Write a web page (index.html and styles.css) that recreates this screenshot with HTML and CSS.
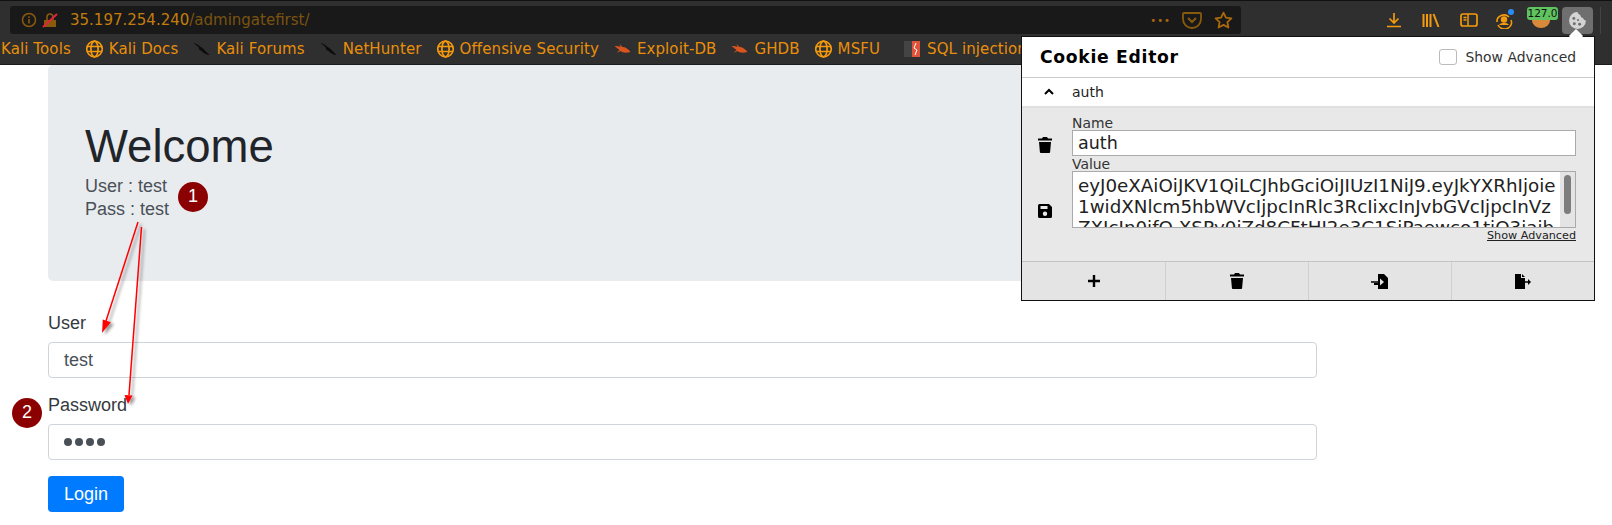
FILE: index.html
```html
<!DOCTYPE html>
<html lang="en">
<head>
<meta charset="utf-8">
<title>Welcome</title>
<link rel="stylesheet" href="styles.css">
</head>
<body>
<header class="chrome">
  <div class="toolbar">
    <div class="urlbar">
      <svg class="ub-ico" width="16" height="16" viewBox="0 0 16 16"><circle cx="8" cy="8" r="6.5" fill="none" stroke="#8a5a0c" stroke-width="1.5"/><rect x="7.2" y="7" width="1.6" height="4.5" fill="#8a5a0c"/><rect x="7.2" y="4.3" width="1.6" height="1.6" fill="#8a5a0c"/></svg>
      <svg class="ub-ico" width="16" height="16" viewBox="0 0 16 16"><path d="M2 8h12v7H2z" fill="#8a5a0c"/><path d="M5 8V5a3 3 0 0 1 6 0v3" fill="none" stroke="#8a5a0c" stroke-width="1.6"/><path d="M1 15 15 2" stroke="#e0243a" stroke-width="2"/></svg>
      <span class="url"><b class="host">35.197.254.240</b>/admingatefirst/</span>
      <span class="dots">•••</span>
      <svg class="ub-act" width="20" height="18" viewBox="0 0 20 18"><path d="M2 2h16a1 1 0 0 1 1 1v5a9 9 0 0 1-18 0V3a1 1 0 0 1 1-1z" fill="none" stroke="#8a5a0c" stroke-width="1.8"/><path d="m6 7 4 4 4-4" fill="none" stroke="#8a5a0c" stroke-width="2"/></svg>
      <svg class="ub-act" width="19" height="18" viewBox="0 0 19 18"><path d="m9.5 1.6 2.4 5 5.5.7-4 3.8 1 5.400-4.900-2.600-4.900 2.600 1-5.400-4-3.800 5.500-.7z" fill="none" stroke="#a8690c" stroke-width="1.8" stroke-linejoin="round"/></svg>
    </div>
    <div class="tools">
      <svg width="16" height="16" viewBox="0 0 16 16"><path d="M8 1v9M3.500 6.500 8 11l4.500-4.500M1 14.500h14" fill="none" stroke="#f59a0c" stroke-width="1.700"/></svg>
      <svg width="18" height="14" viewBox="0 0 18 14"><path d="M1.500 1v13M5 1v13M8.500 1v13M11.500 1l5 13" fill="none" stroke="#f59a0c" stroke-width="2"/></svg>
      <svg class="last-tool" width="18" height="14" viewBox="0 0 18 14"><rect x="1" y="1" width="16" height="12" rx="2" fill="none" stroke="#f59a0c" stroke-width="1.700"/><path d="M8 1v12M3.500 4.500h3M3.500 7h3" stroke="#f59a0c" stroke-width="1.500"/></svg>
      <span class="acct">
        <svg width="18" height="16" viewBox="0 0 18 16"><path d="M2 9a7 6.500 0 0 1 12-5M16 7a7 6.500 0 0 1-13 5" fill="none" stroke="#f59a0c" stroke-width="1.600"/><circle cx="9" cy="6.500" r="3.200" fill="#f59a0c"/><path d="M4 12c2-3 8-3 10 0z" fill="#f59a0c"/></svg>
        <i class="dot"></i>
      </span>
      <span class="ext">
        <i class="ext-ico"></i>
        <b class="ext-badge">127.0</b>
      </span>
      <span class="cookie-btn">
        <svg width="19" height="19" viewBox="0 0 18 18"><path d="M9 1a8 8 0 1 0 8 8c-1.500 0-2.500-1-2.700-2.300C12.800 6.500 11.700 5.300 11.600 3.800 10.400 3.500 9.400 2.400 9 1z" fill="#d4d4d4"/><circle cx="5.500" cy="7" r="1.400" fill="#6f6f6f"/><circle cx="6" cy="12" r="1.400" fill="#6f6f6f"/><circle cx="11" cy="12.500" r="1.400" fill="#6f6f6f"/><circle cx="9.500" cy="8.500" r="1" fill="#6f6f6f"/></svg>
      </span>
      <i class="sep"></i>
    </div>
  </div>
  <nav class="bookmarks">
    <span class="bm">Kali Tools</span>
    <span class="bm"><svg class="globe" viewBox="0 0 18 18"><use href="#g"/></svg>Kali Docs</span>
    <span class="bm"><svg class="bm-ico" viewBox="0 0 18 14"><use href="#k"/></svg>Kali Forums</span>
    <span class="bm"><svg class="bm-ico" viewBox="0 0 18 14"><use href="#k"/></svg>NetHunter</span>
    <span class="bm"><svg class="globe" viewBox="0 0 18 18"><use href="#g"/></svg>Offensive Security</span>
    <span class="bm"><svg class="bm-ico" viewBox="0 0 18 14"><use href="#b"/></svg>Exploit-DB</span>
    <span class="bm"><svg class="bm-ico" viewBox="0 0 18 14"><use href="#b"/></svg>GHDB</span>
    <span class="bm"><svg class="globe" viewBox="0 0 18 18"><use href="#g"/></svg>MSFU</span>
    <span class="bm"><svg class="sq-ico" viewBox="0 0 16 16"><rect width="8" height="16" fill="#444"/><rect x="8" width="8" height="16" fill="#e0533a"/><path d="m12 2-2 5 3 2-2 5" fill="none" stroke="#fff" stroke-width="1"/></svg>SQL injection</span>
  </nav>
</header>

<main class="page">
  <section class="jumbo">
    <h1 class="title">Welcome</h1>
    <p class="cred">User : test</p>
    <p class="cred">Pass : test</p>
  </section>
  <form class="login">
    <label class="lbl">User</label>
    <div class="field">test</div>
    <label class="lbl">Password</label>
    <div class="field pw"><i></i><i></i><i></i><i></i></div>
    <button class="btn" type="button">Login</button>
  </form>
</main>

<svg class="arrows" width="200" height="260" viewBox="0 0 200 260">
  <defs>
    <filter id="sh" x="-50%" y="-10%" width="200%" height="120%"><feDropShadow dx="3" dy="2" stdDeviation="1.500" flood-color="#000" flood-opacity=".4"/></filter>
  </defs>
  <g filter="url(#sh)">
    <path d="M138 2 105 104" stroke="#f00" stroke-width="1.500" fill="none"/>
    <path d="m102 113 .8-13.500 8 2.700z" fill="#f00"/>
    <path d="M141.500 7 129 175" stroke="#f00" stroke-width="1.500" fill="none"/>
    <path d="m128 184-3.500-9 8 .5z" fill="#f00"/>
  </g>
</svg>
<b class="badge b1">1</b>
<b class="badge b2">2</b>

<aside class="popup">
  <i class="caret"></i>
  <div class="pop-head">
    <h2 class="pop-title">Cookie Editor</h2>
    <label class="adv"><i class="check"></i>Show Advanced</label>
  </div>
  <div class="row-head">
    <svg width="12" height="8" viewBox="0 0 12 8"><path d="m2 6 4-4 4 4" fill="none" stroke="#000" stroke-width="2"/></svg>
    <span>auth</span>
  </div>
  <div class="editor">
    <div class="side">
      <svg width="14" height="16" viewBox="0 0 14 16"><use href="#trash"/></svg>
      <svg width="14" height="14" viewBox="0 0 14 14"><use href="#save"/></svg>
    </div>
    <div class="fields">
      <div class="f-lbl">Name</div>
      <div class="f-input">auth</div>
      <div class="f-lbl">Value</div>
      <div class="f-area">
        <div class="f-text">eyJ0eXAiOiJKV1QiLCJhbGciOiJIUzI1NiJ9.eyJkYXRhIjoie<br>1widXNlcm5hbWVcIjpcInRlc3RcIixcInJvbGVcIjpcInVz<br>ZXJcIn0ifQ.XSPy0jZd8CFtHI2e3C1SjPaewco1tjO3jajb</div>
        <div class="track"><i class="thumb"></i></div>
      </div>
      <a class="f-adv">Show Advanced</a>
    </div>
  </div>
  <div class="pop-foot">
    <span class="cell"><svg width="14" height="14" viewBox="0 0 14 14"><path d="M7 1v12M1 7h12" stroke="#000" stroke-width="2.400"/></svg></span>
    <span class="cell"><svg width="14" height="16" viewBox="0 0 14 16"><use href="#trash"/></svg></span>
    <span class="cell"><svg width="18" height="15" viewBox="0 0 18 15"><path d="M7 0h6l4 4v11H7v-4H3V9h4V7z" fill="#000"/><path d="M0 8h9" stroke="#000" stroke-width="1.500" fill="none"/><path d="m9 4.500 4 3.500-4 3.500z" fill="#e4e4e4"/></svg></span>
    <span class="cell"><svg width="16" height="15" viewBox="0 0 16 15"><path d="M0 0h6v4h4v11H0zM7 0l3 3H7z" fill="#000"/><path d="M9 8h5" stroke="#000" stroke-width="1.500"/><path d="m13 5 3 3-3 3z" fill="#000"/></svg></span>
  </div>
</aside>

<svg class="defs" width="0" height="0">
  <defs>
    <symbol id="g" viewBox="0 0 18 18"><g fill="none" stroke="#f59a0c" stroke-width="1.700"><circle cx="9" cy="9" r="7.800"/><ellipse cx="9" cy="9" rx="3.600" ry="7.800"/><path d="M1.500 6.500h15M1.500 11.500h15"/></g></symbol>
    <symbol id="k" viewBox="0 0 18 14"><path d="M1 1c3 .5 5 2 7 4 1 0 2 1 3 2l6 6c-3 0-6-2-8-4L7 8 6 5z" fill="#0c0c0c"/></symbol>
    <symbol id="b" viewBox="0 0 18 14"><path d="M1 4c3 0 4 0 6 1l-1-3 3 3c3 0 6 2 8 5-4 1-8 1-10-1L3 11l3-3z" fill="#d9541e"/></symbol>
    <symbol id="trash" viewBox="0 0 14 16"><path d="M5 0h4l1 1.500h4V3.500H0V1.500h4zM1 5h12l-.9 10a1 1 0 0 1-1 1H2.900a1 1 0 0 1-1-1z" fill="#000"/></symbol>
    <symbol id="save" viewBox="0 0 14 14"><path fill-rule="evenodd" d="M1.500 0H11l3 3v9.500a1.500 1.500 0 0 1-1.500 1.500h-11A1.500 1.500 0 0 1 0 12.500v-11A1.500 1.500 0 0 1 1.500 0zM2.500 2v3h7V2zM7 7.500a2.200 2.200 0 1 0 0 4.400 2.200 2.200 0 0 0 0-4.400z" fill="#000"/></symbol>
  </defs>
</svg>
</body>
</html>
```

FILE: styles.css
```css
* { box-sizing: border-box; }
html, body { margin: 0; padding: 0; }
body {
  position: relative;
  width: 1612px;
  height: 525px;
  overflow: hidden;
  background: #fff;
  font-family: "Liberation Sans", Arial, sans-serif;
  font-size: 18px;
  color: #212529;
}
i { display: block; }

/* Browser chrome */
.chrome { background: #2f2f2f; height: 65px; border-top: 1px solid #111; border-bottom: 1px solid #1c1c1c; font-family: "DejaVu Sans", sans-serif; }
.toolbar { height: 33px; padding: 5px 0 0 10px; display: flex; align-items: flex-start; }
.urlbar {
  width: 1231px; height: 28px; flex: none;
  background: #191919; border-radius: 3px;
  display: flex; align-items: center;
  padding: 0 8px 0 11px; color: #7a5310;
}
.ub-ico { margin-right: 5px; flex: none; }
.url { margin-left: 7px; font-size: 15px; color: #7a5310; flex: 1; white-space: nowrap; }
.host { font-weight: 400; color: #c27d0e; }
.dots { font-size: 10px; letter-spacing: 1px; color: #a8690c; margin-right: -1px; }
.ub-act { margin-left: 12px; }
.tools { flex: 1; display: flex; align-items: center; height: 28px; padding-left: 145px; position: relative; }
.tools > svg { margin-right: 20px; flex: none; }
.tools > .last-tool { margin-right: 17px; }
.acct { position: relative; width: 18px; height: 16px; margin-right: 16px; flex: none; }
.dot { position: absolute; right: -1px; top: -3px; width: 6px; height: 6px; border-radius: 50%; background: #2a8cf5; }
.ext { position: relative; width: 22px; height: 22px; margin-right: 11px; flex: none; }
.ext-ico { position: absolute; left: 3px; top: 4px; width: 18px; height: 15px; border-radius: 50%; background: #d9893b; }
.ext-badge {
  position: absolute; left: -2px; top: -2px; width: 31px; height: 13px;
  background: #5fc35f; border-radius: 3px; color: #111;
  font-size: 10.500px; font-weight: 400; line-height: 13px; text-align: center;
}
.cookie-btn { width: 31px; height: 27px; flex: none; background: #6f6f6f; border-radius: 4px; display: flex; align-items: center; justify-content: center; }
.sep { width: 1px; height: 27px; flex: none; background: #444; margin-left: 7px; }

.bookmarks { height: 30px; display: flex; align-items: center; gap: 14px; padding-left: 1px; white-space: nowrap; overflow: hidden; color: #e88e0a; font-size: 15px; letter-spacing: .1px; }
.bm { display: flex; align-items: center; gap: 5px; flex: none; }
.globe { width: 19px; height: 18px; }
.bm-ico { width: 19px; height: 14px; }
.sq-ico { width: 20px; height: 16px; margin-left: 8px; }

/* Page */
.page { padding: 0 0 0 48px; width: 1317px; }
.jumbo { background: #e9ecef; height: 216px; border-radius: 5px; padding: 55px 37px 0; }
.title { margin: 0 0 1px; font-size: 45.500px; font-weight: 400; line-height: 54px; color: #212529; }
.cred { margin: 0; font-size: 18px; line-height: 23px; height: 23px; color: #495057; }
.login { padding-top: 27px; }
.lbl { display: block; height: 34px; line-height: 30px; color: #343a40; }
.field {
  height: 36px; border: 1px solid #ced4da; border-radius: 4px;
  padding: 0 15px; line-height: 34px; color: #495057; background: #fff;
  margin-bottom: 12px;
}
.pw { display: flex; align-items: center; gap: 3px; margin-bottom: 16px; }
.pw i { width: 8px; height: 8px; border-radius: 50%; background: #495057; }
.btn {
  display: block; width: 76px; height: 36px; border: 0; border-radius: 4px;
  background: #007bff; color: #fff; font: inherit; padding: 0;
}

/* Annotations */
.arrows { position: absolute; left: 0; top: 220px; }
.badge {
  position: absolute; width: 30px; height: 30px; border-radius: 50%;
  background: #8b0000; color: #fff; font-weight: 400; font-size: 18px;
  line-height: 28px; text-align: center;
}
.b1 { left: 178px; top: 182px; }
.b2 { left: 12px; top: 398px; }

/* Popup */
.popup {
  position: absolute; left: 1021px; top: 36px; width: 574px; height: 265px;
  background: #fff; border: 1px solid #111;
  font-family: "DejaVu Sans", sans-serif; display: flex; flex-direction: column;
}
.caret { position: absolute; right: 13px; top: -6px; width: 10px; height: 10px; background: #fff; transform: rotate(45deg); }
.pop-head { height: 41px; display: flex; align-items: center; justify-content: space-between; padding: 0 18px 0 18px; border-bottom: 1px solid #ccc; flex: none; position: relative; }
.pop-title { margin: 0; font-size: 17.200px; font-weight: 700; color: #000; letter-spacing: .7px; }
.adv { display: flex; align-items: center; gap: 8px; font-size: 13.900px; color: #333; }
.check { width: 18px; height: 16px; border: 1px solid #bbb; border-radius: 3px; background: #fff; }
.row-head { height: 30px; display: flex; align-items: center; gap: 17px; padding-left: 21px; font-size: 14px; color: #222; border-bottom: 2px solid #e0e0e0; flex: none; }
.editor { flex: 1; background: #e8e8e8; display: flex; padding: 8px 18px 0 0; }
.side { width: 50px; flex: none; display: flex; flex-direction: column; align-items: flex-start; padding: 21px 0 0 16px; gap: 51px; }
.fields { flex: 1; min-width: 0; display: flex; flex-direction: column; }
.f-lbl { font-size: 13.900px; line-height: 15px; height: 14px; color: #333; }
.f-input { height: 26px; background: #fff; border: 1px solid #aaa; font-size: 17.500px; line-height: 24px; padding: 0 5px; color: #222; margin-bottom: 1px; }
.f-area { height: 57px; background: #fff; border: 1px solid #aaa; display: flex; overflow: hidden; }
.f-text { flex: 1; min-width: 0; font-size: 18.300px; line-height: 21px; padding: 3px 5px 0; color: #222; white-space: nowrap; overflow: hidden; }
.track { width: 15px; flex: none; background: #e4e4e4; padding: 3px 4px; }
.thumb { height: 39px; border-radius: 4px; background: #7d7d7d; }
.f-adv { align-self: flex-end; font-size: 11.200px; line-height: 13px; margin-top: 1px; color: #222; text-decoration: underline; }
.pop-foot { height: 39px; flex: none; background: #e4e4e4; border-top: 1px solid #c4c4c4; display: grid; grid-template-columns: 144px 143px 143px 1fr; }
.cell { display: flex; align-items: center; justify-content: center; border-right: 1px solid #cfcfcf; }
.cell:last-child { border-right: 0; }
.defs { position: absolute; }
```
